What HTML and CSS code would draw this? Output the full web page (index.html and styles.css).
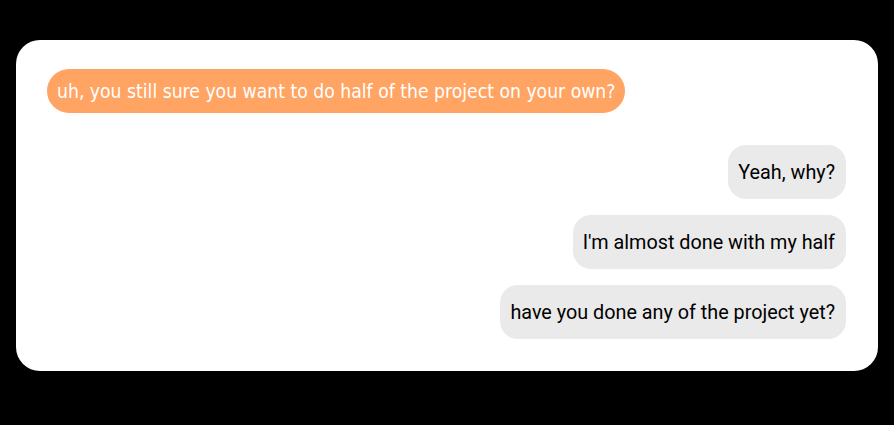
FILE: index.html
```html
<!DOCTYPE html>
<html>
<head>
<meta charset="utf-8">
<link rel="stylesheet" href="styles.css">
</head>
<body>
<div class="card">
  <div class="row left"><div class="bubble them">uh, you still sure you want to do half of the project on your own?</div></div>
  <div class="row right first"><div class="bubble me">Yeah, why?</div></div>
  <div class="row right"><div class="bubble me">I'm almost done with my half</div></div>
  <div class="row right"><div class="bubble me">have you done any of the project yet?</div></div>
</div>
</body>
</html>
```
FILE: styles.css
```css
html, body { margin: 0; padding: 0; background: #000; }
body { padding: 40px 16px 0 16px; height: 425px; box-sizing: border-box; }
.card {
  background: #fff;
  border-radius: 24px;
  height: 331px;
  box-sizing: border-box;
  padding: 29px 32px 30px 31px;
  display: flex;
  flex-direction: column;
  gap: 16px;
}
.row { display: flex; }
.row.left { justify-content: flex-start; }
.row.right { justify-content: flex-end; }
.row.first { margin-top: 16px; }
.bubble { white-space: nowrap; }
.them {
  background: #ffa463;
  color: #fff;
  font-family: "DejaVu Sans", sans-serif;
  font-stretch: condensed;
  font-size: 19.2px;
  line-height: 24px;
  padding: 11px 10px 9px 10px;
  border-radius: 22px;
}
.me {
  background: #eaeaea;
  color: #000;
  font-family: Roboto, sans-serif;
  font-size: 19.8px;
  line-height: 23px;
  padding: 16px 11px 15px 10px;
  border-radius: 18px;
}
```
